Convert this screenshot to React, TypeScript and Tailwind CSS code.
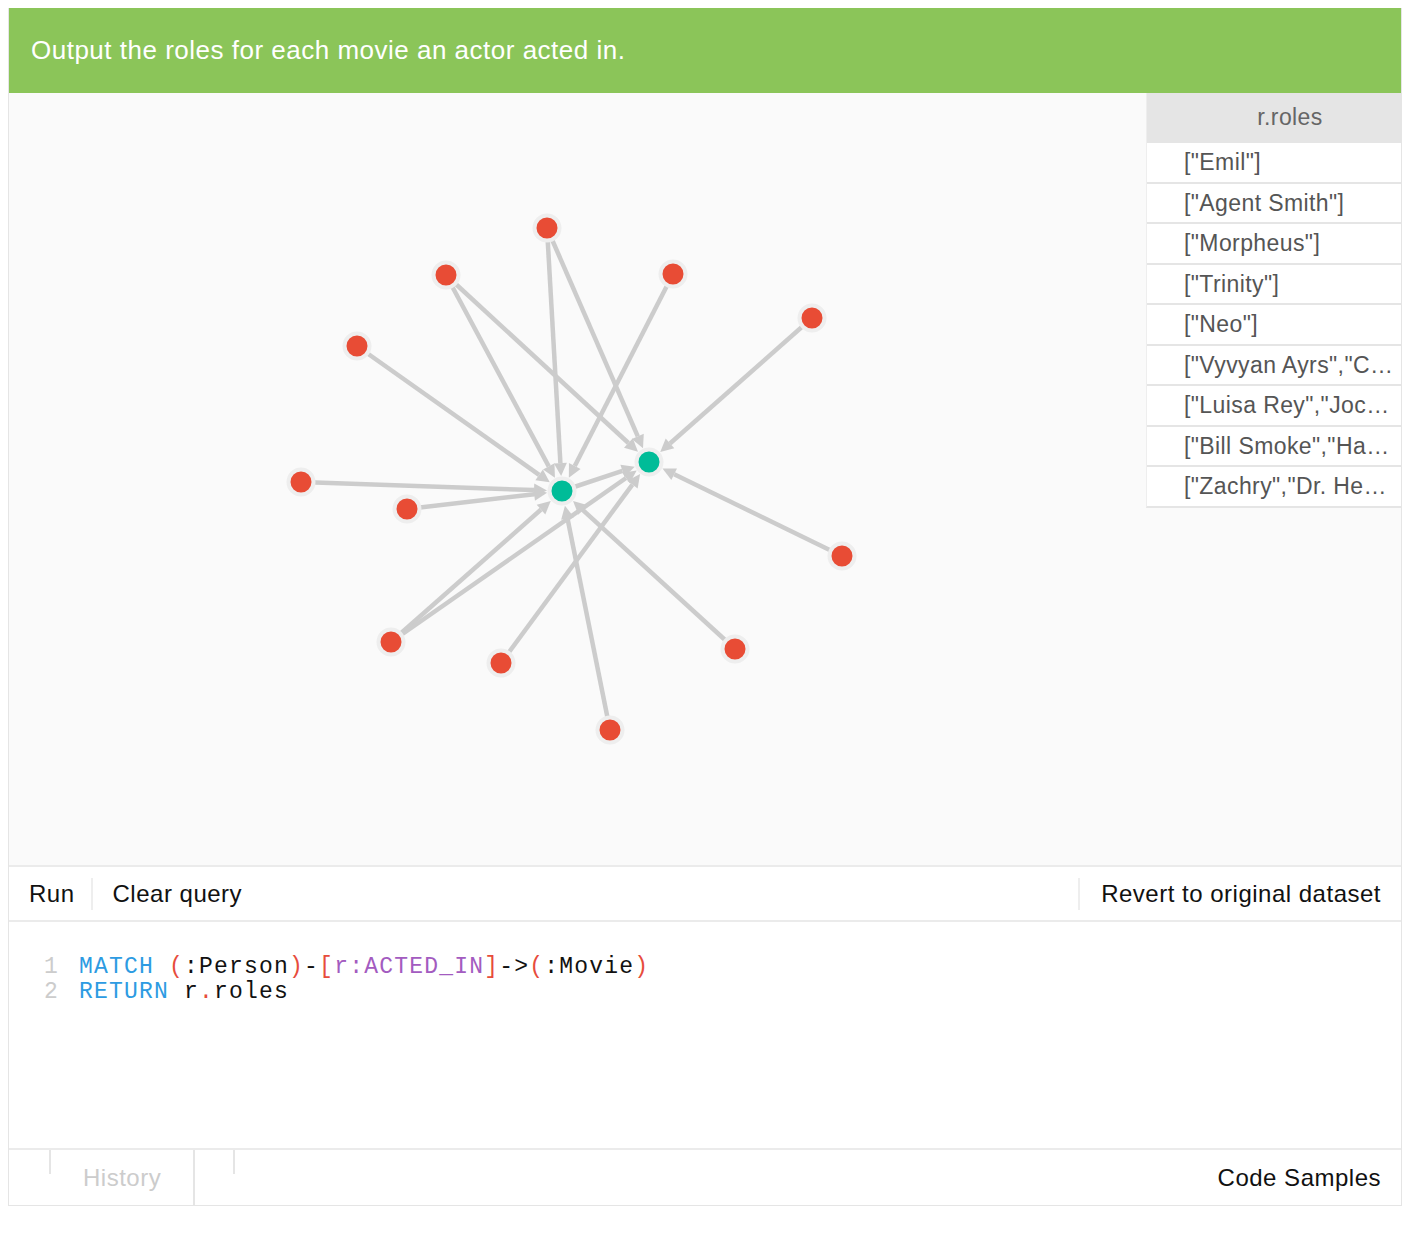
const font = { fontFamily: '"Liberation Sans", Arial, sans-serif' }

type Pt = [number, number]

const reds: Pt[] = [
  [547, 228], [446, 275], [673, 274], [812, 318], [357, 346], [301, 482],
  [407, 509], [842, 556], [391, 642], [501, 663], [735, 649], [610, 730],
]
const A: Pt = [562, 491]
const B: Pt = [649, 462]

const edges: [Pt, Pt][] = [
  [reds[0], A], [reds[0], B], [reds[1], A], [reds[1], B], [reds[2], A],
  [reds[3], B], [reds[4], A], [reds[5], A], [reds[6], A], [A, B],
  [reds[7], B], [reds[8], A], [reds[8], B], [reds[9], B], [reds[10], A],
  [reds[11], A],
]

const roles = [
  '["Emil"]', '["Agent Smith"]', '["Morpheus"]', '["Trinity"]', '["Neo"]',
  '["Vyvyan Ayrs","Captain Molyneux"]', '["Luisa Rey","Jocasta Ayrs"]',
  '["Bill Smoke","Haskell Moore"]', '["Zachry","Dr. Henry Goose"]',
]

function Edge({ from, to }: { from: Pt; to: Pt }) {
  const dx = to[0] - from[0]
  const dy = to[1] - from[1]
  const len = Math.hypot(dx, dy)
  const ux = dx / len
  const uy = dy / len
  const tip: Pt = [to[0] - ux * 15, to[1] - uy * 15]
  const base: Pt = [tip[0] - ux * 13, tip[1] - uy * 13]
  const px = -uy * 6.5
  const py = ux * 6.5
  return (
    <g>
      <line x1={from[0]} y1={from[1]} x2={base[0]} y2={base[1]} stroke="#cccccc" strokeWidth={4.5} />
      <polygon
        points={`${tip[0]},${tip[1]} ${base[0] + px},${base[1] + py} ${base[0] - px},${base[1] - py}`}
        fill="#cccccc"
      />
    </g>
  )
}

function Node({ at, color }: { at: Pt; color: string }) {
  return <circle cx={at[0]} cy={at[1]} r={12.5} fill={color} stroke="#eeeeee" strokeWidth={4} />
}

function Graph() {
  return (
    <svg className="absolute inset-0" width={1138} height={772} viewBox="9 93 1138 772">
      {edges.map((e, i) => (
        <Edge key={i} from={e[0]} to={e[1]} />
      ))}
      {reds.map((p, i) => (
        <Node key={i} at={p} color="#e84c35" />
      ))}
      <Node at={A} color="#00bc98" />
      <Node at={B} color="#00bc98" />
    </svg>
  )
}

export default function App() {
  return (
    <div className="bg-white min-h-[1236px] pt-2 px-2" style={font}>
      <div className="w-[1394px] border border-[#e5e5e5] border-t-0">
        <div className="h-[85px] bg-[#8bc559] flex items-center pl-[22px] text-white text-[26px] tracking-[0.5px]">
          Output the roles for each movie an actor acted in.
        </div>

        <div className="relative h-[772px] bg-[#fafafa] flex justify-end">
          <Graph />
          <div className="relative w-[255px] self-start border-l border-[#eeeeee] border-b-2 border-b-[#e5e5e5] bg-white">
            <div className="h-[48px] pl-[32px] bg-[#e5e5e5] flex items-center justify-center text-[#666] text-[23px] tracking-[0.4px]">
              r.roles
            </div>
            {roles.map((r) => (
              <div
                key={r}
                className="h-[40.5px] flex items-center pl-[37px] pr-[4px] border-t-2 border-[#e5e5e5] text-[#555] text-[23px] tracking-[0.4px] whitespace-nowrap overflow-hidden"
              >
                <span className="overflow-hidden text-ellipsis">{r}</span>
              </div>
            ))}
          </div>
        </div>

        <div className="h-[57px] border-t-2 border-b-2 border-[#ebebeb] flex items-center text-[24px] text-[#111] tracking-[0.5px]">
          <span className="pl-[20px] pr-[16px]">Run</span>
          <span className="w-[2px] h-[32px] bg-[#eeeeee]" />
          <span className="pl-[20px]">Clear query</span>
          <span className="flex-1" />
          <span className="w-[2px] h-[32px] bg-[#eeeeee]" />
          <span className="pl-[21px] pr-[20px]">Revert to original dataset</span>
        </div>

        <div
          className="h-[226px] pt-[33px] text-[23px] leading-[25px] tracking-[1.2px] text-[#111]"
          style={{ fontFamily: '"Liberation Mono", "Courier New", monospace' }}
        >
          <div className="flex">
            <span className="w-[50px] text-right text-[#cccccc]">1</span>
            <span className="pl-[20px]">
              <span className="text-[#2d9be2]">MATCH</span> <span className="text-[#e74c3c]">(</span>:Person
              <span className="text-[#e74c3c]">)</span>-<span className="text-[#e74c3c]">[</span>
              <span className="text-[#a35bc0]">r:ACTED_IN</span>
              <span className="text-[#e74c3c]">]</span>-&gt;<span className="text-[#e74c3c]">(</span>:Movie
              <span className="text-[#e74c3c]">)</span>
            </span>
          </div>
          <div className="flex">
            <span className="w-[50px] text-right text-[#cccccc]">2</span>
            <span className="pl-[20px]">
              <span className="text-[#2d9be2]">RETURN</span> r<span className="text-[#e74c3c]">.</span>roles
            </span>
          </div>
        </div>

        <div className="h-[57px] border-t-2 border-[#ebebeb] flex text-[24px] tracking-[0.5px]">
          <span className="ml-[40px] w-[2px] h-[24px] bg-[#e5e5e5]" />
          <span className="pl-[32px] pr-[32px] flex items-center text-[#cccccc]">History</span>
          <span className="w-[2px] bg-[#e5e5e5]" />
          <span className="ml-[38px] w-[2px] h-[24px] bg-[#e5e5e5]" />
          <span className="flex-1" />
          <span className="pr-[20px] flex items-center text-[#111]">Code Samples</span>
        </div>
      </div>
    </div>
  )
}
